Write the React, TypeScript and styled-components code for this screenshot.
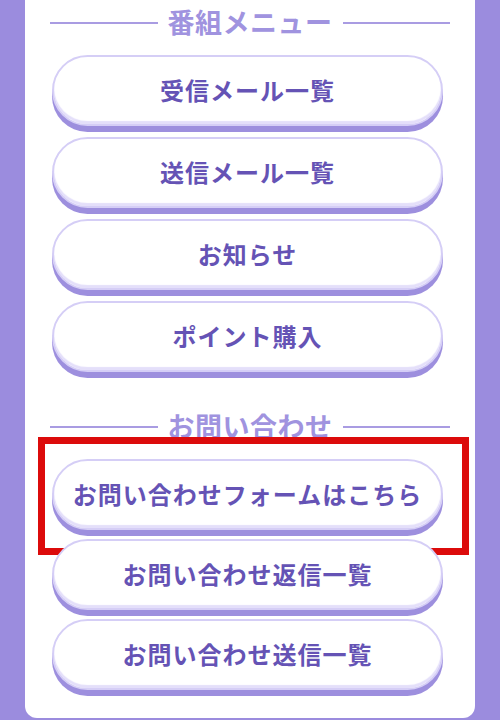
import styled, { createGlobalStyle } from "styled-components";

const GlobalStyle = createGlobalStyle`
  html, body {
    margin: 0;
    padding: 0;
    background: #9b8cde;
    height: 720px;
    overflow: hidden;
  }
  * {
    box-sizing: border-box;
  }
`;

interface MenuItem {
  label: string;
  highlight?: boolean;
}

const programMenu: MenuItem[] = [
  { label: "受信メール一覧" },
  { label: "送信メール一覧" },
  { label: "お知らせ" },
  { label: "ポイント購入" },
];

const contactMenu: MenuItem[] = [
  { label: "お問い合わせフォームはこちら", highlight: true },
  { label: "お問い合わせ返信一覧" },
  { label: "お問い合わせ送信一覧" },
];

function Section({ title, items, first }: { title: string; items: MenuItem[]; first?: boolean }) {
  return (
    <SectionBox $first={first}>
      <Heading>
        <span>{title}</span>
      </Heading>
      <ButtonList $tight={!first}>
        {items.map((item) => (
          <ButtonRow key={item.label}>
            <MenuButton type="button">{item.label}</MenuButton>
            {item.highlight ? <Highlight /> : null}
          </ButtonRow>
        ))}
      </ButtonList>
    </SectionBox>
  );
}

function App() {
  return (
    <Page>
      <GlobalStyle />
      <Panel>
        <Section title="番組メニュー" items={programMenu} first />
        <Section title="お問い合わせ" items={contactMenu} />
      </Panel>
    </Page>
  );
}

export default App;

const Page = styled.div`
  width: 500px;
  height: 720px;
  padding: 0 25px;
  font-family: "Noto Sans CJK JP", "Noto Sans", sans-serif;
`;

const Panel = styled.div`
  background: #ffffff;
  height: 718px;
  border-radius: 0 0 12px 12px;
  padding: 6px 0 0;
`;

const SectionBox = styled.section<{ $first?: boolean }>`
  margin-top: ${(p) => (p.$first ? "0" : "38px")};
`;

const Heading = styled.h2`
  margin: 0 25px 17px;
  display: flex;
  align-items: center;
  gap: 10px;
  font-size: 27px;
  line-height: 32px;
  font-weight: 700;
  color: #a093df;
  letter-spacing: 0.5px;

  &::before,
  &::after {
    content: "";
    flex: 1;
    height: 2px;
    background: #a99ce2;
    margin-top: 1px;
  }
`;

const ButtonList = styled.div<{ $tight?: boolean }>`
  display: flex;
  flex-direction: column;
  gap: ${(p) => (p.$tight ? "9px" : "11px")};
  padding: 0 32px 0 27px;
`;

const ButtonRow = styled.div`
  position: relative;
`;

const MenuButton = styled.button`
  display: flex;
  align-items: center;
  justify-content: center;
  width: 100%;
  height: 71px;
  border: 2px solid #d5cef6;
  border-radius: 36px;
  background: #ffffff;
  box-shadow: inset 0 -3px 1px #e4dffa, 0 6px 0 #9d8fde;
  color: #6553b5;
  font-family: inherit;
  font-size: 24px;
  font-weight: 700;
  letter-spacing: 1px;
  padding: 0 0 2px;
  cursor: pointer;
`;

const Highlight = styled.div`
  position: absolute;
  top: -22px;
  left: -14px;
  right: -26px;
  bottom: -25px;
  border: 7px solid #dc0b0b;
  pointer-events: none;
`;
